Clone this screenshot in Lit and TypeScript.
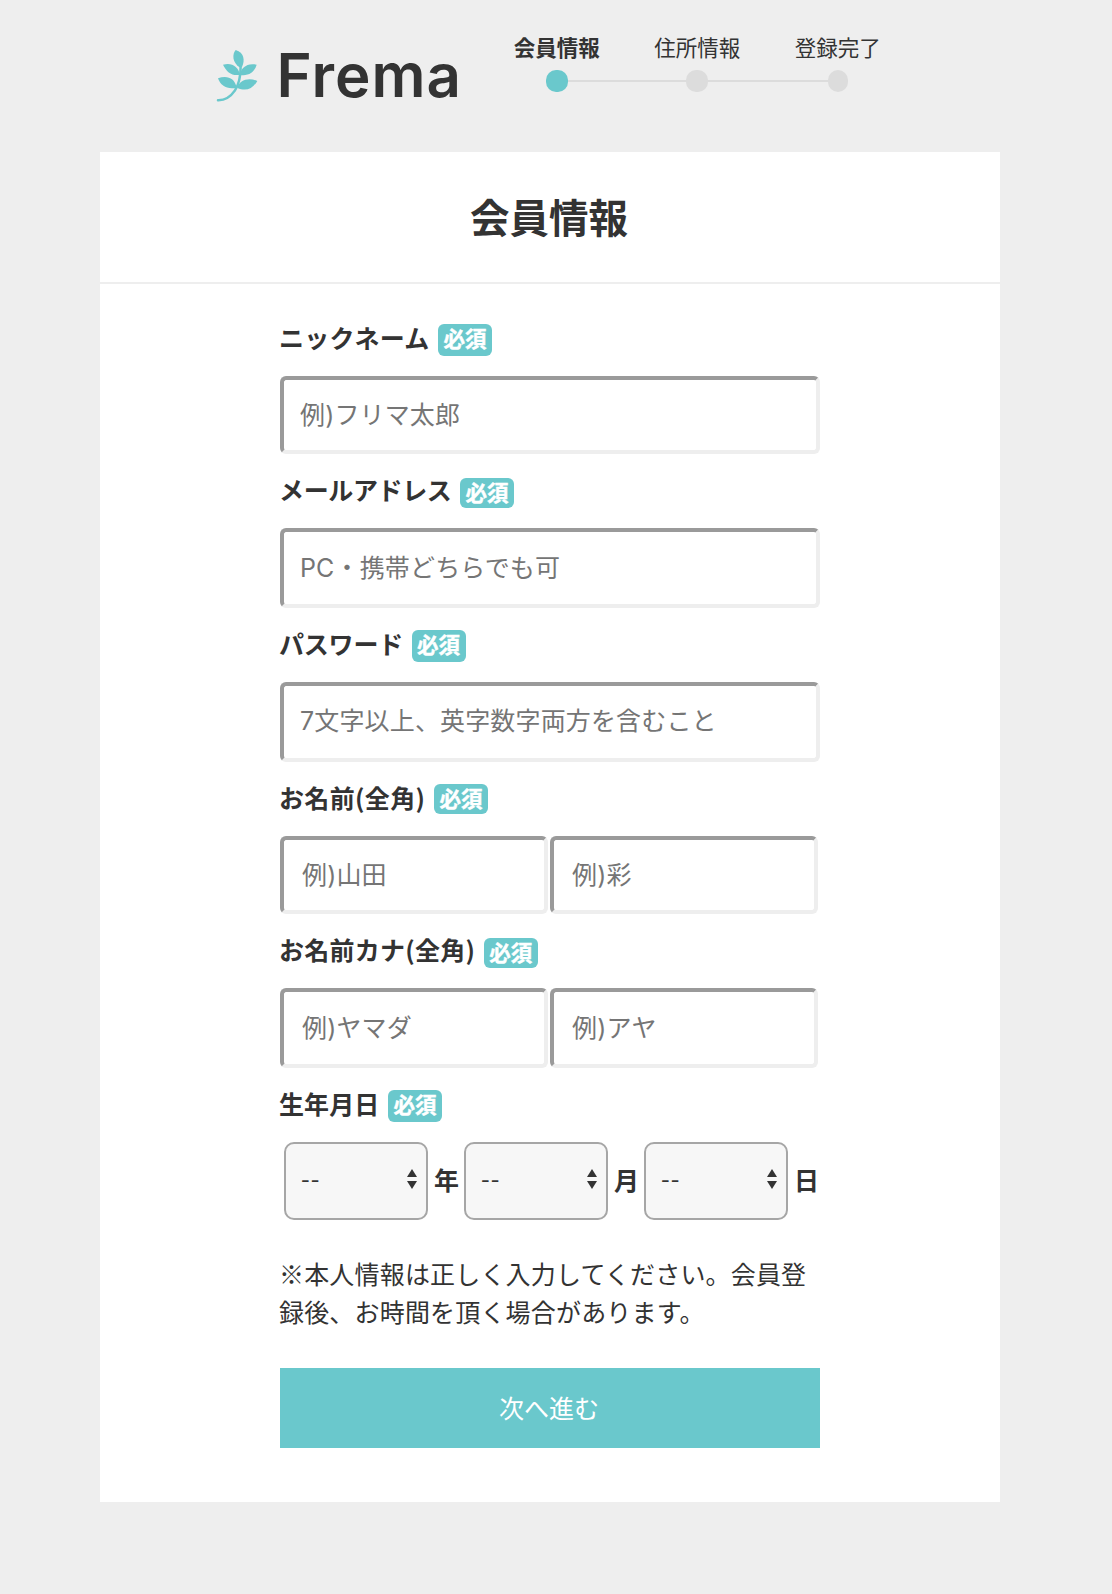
import { LitElement, html, svg, css } from "lit";
import { customElement } from "lit/decorators.js";
import { styleMap } from "lit/directives/style-map.js";

interface Field {
  label: string;
  spacing: number;
  line: number;
  gapAbove: number;
  badge: number;
  gapBelow: number;
  height: number;
  lift: number;
  placeholders: string[];
}

const FIELDS: Field[] = [
  { label: "ニックネーム", spacing: 0.2, line: 26, gapAbove: 0, badge: 32, gapBelow: 20, height: 78, lift: 1, placeholders: ["例)フリマ太郎"] },
  { label: "メールアドレス", spacing: -0.36, line: 23, gapAbove: 24, badge: 30, gapBelow: 20, height: 80, lift: 0, placeholders: ["PC・携帯どちらでも可"] },
  { label: "パスワード", spacing: -0.2, line: 26, gapAbove: 22, badge: 32, gapBelow: 20, height: 80, lift: 2, placeholders: ["7文字以上、英字数字両方を含むこと"] },
  { label: "お名前(全角)", spacing: 0.35, line: 26, gapAbove: 22, badge: 30, gapBelow: 22, height: 78, lift: 1, placeholders: ["例)山田", "例)彩"] },
  { label: "お名前カナ(全角)", spacing: 0.25, line: 23, gapAbove: 24, badge: 30, gapBelow: 20, height: 80, lift: 0, placeholders: ["例)ヤマダ", "例)アヤ"] },
  { label: "生年月日", spacing: 0.1, line: 26, gapAbove: 22, badge: 32, gapBelow: 20, height: 78, lift: 0, placeholders: [] },
];

const STEPS = ["会員情報", "住所情報", "登録完了"];

const leaf = svg`
  <path d="M107 90C96 103 97 127 118 142L126 141C135 121 133 98 107 90Z"/>
  <path d="M69 134C80 157 97 169 120 164C115 140 95 126 69 134Z"/>
  <path d="M170 134C163 158 145 169 120 165C121 144 142 127 170 134Z"/>
  <path d="M54 175C62 198 82 209 110 203C104 173 80 165 54 175Z"/>
  <path d="M172 183C158 207 138 215 112 204C117 179 147 172 172 183Z"/>
  <path d="M54 240.500C75 241 92 230 105 211C117 193 122 169 122 139" fill="none" stroke="#6ac8cc" stroke-width="7.500" stroke-linecap="round"/>`;

@customElement("app-root")
export class AppRoot extends LitElement {
  static styles = css`
    :host {
      display: block;
      box-sizing: border-box;
      height: 1594px;
      background: #eee;
      color: #333;
      font-family: "Noto Sans CJK JP", sans-serif;
      font-size: 25px;
    }
    * { box-sizing: border-box; }
    .header { display: flex; height: 152px; padding: 36px 0 0 216px; }
    .brand { display: flex; width: 270.5px; flex: none; padding-top: 13px; }
    .leaf { width: 42px; height: 53px; flex: none; }
    .name {
      margin: -6px 0 0 18.5px;
      font: 600 60px/64px Inter, sans-serif;
      letter-spacing: 1px;
      white-space: nowrap;
    }
    .steps { display: flex; margin: 0; padding: 0; list-style: none; }
    .step { width: 140.5px; flex: none; font-size: 21.5px; line-height: 22px; text-align: center; white-space: nowrap; }
    .step.on { font-weight: 700; }
    .track { display: flex; align-items: center; margin-top: 12px; height: 22px; }
    .rule { flex: 1; height: 2px; background: #dcdcdc; }
    .rule.none { background: none; }
    .dot { width: 22px; height: 22px; border-radius: 10px; background: #dcdcdc; }
    .on .dot { background: #6ac8cc; }
    .step:last-child .dot { width: 20px; }
    .card { width: 900px; height: 1350px; margin-left: 100px; background: #fff; }
    .title {
      height: 132px;
      margin: 0;
      border-bottom: 2px solid #eee;
      font-size: 39.5px;
      font-weight: 700;
      line-height: 127px;
      text-align: center;
      padding-right: 2px;
    }
    .form { width: 540px; margin: 0 180px; padding-top: 40px; }
    .caption { display: flex; align-items: flex-start; font-weight: 700; white-space: nowrap; }
    .label { margin-left: -1px; }
    .badge {
      width: 54px;
      height: 100%;
      margin-left: 8.6px;
      border-radius: 6px;
      background: #6ac8cc;
      color: #fff;
      font-size: 21.5px;
      line-height: 28px;
      text-align: center;
      -webkit-text-stroke: 0.4px #fff;
    }
    .inputs { display: flex; gap: 2px; }
    .input {
      width: 540px;
      height: 100%;
      margin: 0;
      padding: 0 16px;
      border: 4px solid;
      border-color: #9a9a9a #eee #eee #9a9a9a;
      border-radius: 6px;
      background: #fff;
      font: 25px Inter, "Noto Sans CJK JP", sans-serif;
      letter-spacing: 0.15px;
      outline: none;
    }
    .input::placeholder { color: #757575; opacity: 1; }
    .half { width: 268px; padding-left: 18px; }
    .birth { display: flex; height: 78px; padding-left: 4px; font-weight: 700; }
    .part { display: flex; width: 180px; flex: none; align-items: center; gap: 6px; line-height: 74px; }
    .picker { position: relative; width: 144px; height: 78px; flex: none; }
    .unit { padding-bottom: 4px; }
    .select {
      display: block;
      width: 144px;
      height: 78px;
      padding: 0 15px 8px;
      appearance: none;
      border: 2px solid #a6a6a6;
      border-radius: 10px;
      background: #f7f7f7;
      color: #333;
      font: inherit;
      line-height: 36px;
      font-weight: 400;
      letter-spacing: 1px;
    }
    .arrows { position: absolute; right: 11px; top: 27px; width: 10px; height: 20px; fill: #333; pointer-events: none; }
    .note { margin: 34px -10px 0 -1px; padding-right: 10px; line-height: 38px; letter-spacing: 0.18px; }
    .next {
      display: block;
      width: 540px;
      height: 80px;
      margin-top: 38px;
      padding: 0 2px 2px 0;
      border: 0;
      background: #6ac8cc;
      color: #fff;
      font: inherit;
    }
  `;

  private caption(f: Field) {
    return html`<div
      class="caption"
      style=${styleMap({
        height: `${f.badge}px`,
        marginTop: `${f.gapAbove}px`,
        marginBottom: `${f.gapBelow}px`,
        lineHeight: `${f.line}px`,
      })}
    >
      <span class="label" style=${styleMap({ letterSpacing: `${f.spacing}px` })}>${f.label}</span>
      <span class="badge">必須</span>
    </div>`;
  }

  private controls(f: Field) {
    if (!f.placeholders.length) {
      return html`<div class="birth">
        ${["年", "月", "日"].map(
          (unit) => html`<div class="part">
            <div class="picker">
              <select class="select" aria-label=${unit}><option>--</option></select>
              <svg class="arrows" viewBox="0 0 10 20"><path d="M5 0L10 8H0ZM0 12H10L5 20Z" /></svg>
            </div>
            <span class="unit">${unit}</span>
          </div>`
        )}
      </div>`;
    }
    const half = f.placeholders.length > 1 ? "half" : "";
    return html`<div class="inputs" style=${styleMap({ height: `${f.height}px` })}>
      ${f.placeholders.map(
        (p) => html`<input class="input ${half}" style=${styleMap({ paddingBottom: `${f.lift}px` })} placeholder=${p} />`
      )}
    </div>`;
  }

  render() {
    return html`
      <header class="header">
        <div class="brand">
          <svg class="leaf" viewBox="48 87 126 159" fill="#6ac8cc">${leaf}</svg>
          <span class="name">Frema</span>
        </div>
        <ol class="steps">
          ${STEPS.map(
            (s, i) => html`<li class="step ${i === 0 ? "on" : ""}">
              ${s}
              <div class="track">
                <i class="rule ${i === 0 ? "none" : ""}"></i><i class="dot"></i
                ><i class="rule ${i === 2 ? "none" : ""}"></i>
              </div>
            </li>`
          )}
        </ol>
      </header>
      <main class="card">
        <h1 class="title">会員情報</h1>
        <div class="form">
          ${FIELDS.map((f) => html`${this.caption(f)}${this.controls(f)}`)}
          <p class="note">※本人情報は正しく入力してください。会員登録後、お時間を頂く場合があります。</p>
          <button class="next">次へ進む</button>
        </div>
      </main>
    `;
  }
}
